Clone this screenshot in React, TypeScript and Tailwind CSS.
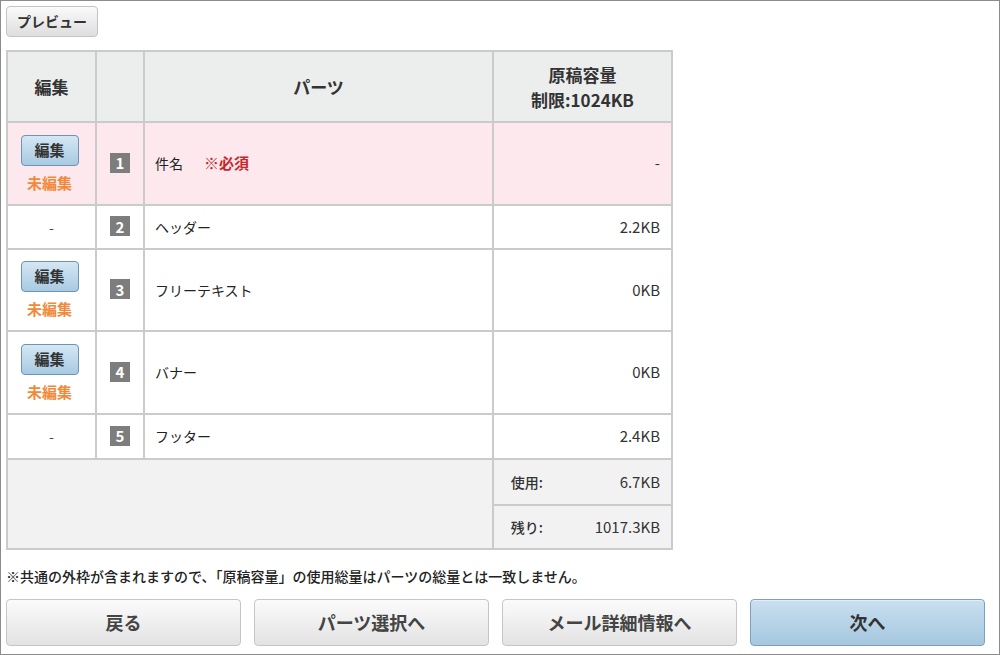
const rows = [
  { no: 1, name: "件名", required: true, size: "-", edit: true, pink: true, h: "h-[83px]" },
  { no: 2, name: "ヘッダー", size: "2.2KB", edit: false, h: "h-[44px]" },
  { no: 3, name: "フリーテキスト", size: "0KB", edit: true, h: "h-[82px]" },
  { no: 4, name: "バナー", size: "0KB", edit: true, h: "h-[83px]" },
  { no: 5, name: "フッター", size: "2.4KB", edit: false, h: "h-[45px]" },
];

function GrayButton({ label, blue }: { label: string; blue?: boolean }) {
  return (
    <button
      className={
        blue
          ? "h-[47px] w-[235px] rounded-[4px] border border-[#7f9fbd] bg-gradient-to-b from-[#c9e0f0] to-[#a5c7df] text-[18px] font-bold text-[#333] shadow-[inset_0_1px_0_#e0eef8]"
          : "h-[47px] w-[235px] rounded-[4px] border border-[#c6c6c6] bg-gradient-to-b from-[#fbfbfb] to-[#e3e3e3] text-[18px] font-bold text-[#444]"
      }
    >
      {label}
    </button>
  );
}

export default function App() {
  return (
    <div className="box-border h-[655px] w-[1000px] overflow-hidden border border-[#8c8c8c] bg-white font-['Noto_Sans_CJK_JP','Noto_Sans',sans-serif] text-[#222]">
      <div className="px-[5px] pt-[5px]">
        <button className="h-[31px] w-[92px] rounded-[4px] border border-[#c4c4c4] bg-gradient-to-b from-[#fafafa] to-[#dedede] text-[14px] font-bold text-[#333]">
          プレビュー
        </button>

        <table className="mt-[13px] w-[667px] border-collapse border-2 border-[#cbcbcb] text-[14px]">
          <colgroup>
            <col className="w-[89px]" />
            <col className="w-[48px]" />
            <col className="w-[349px]" />
            <col />
          </colgroup>
          <thead>
            <tr className="h-[71px] bg-[#eceeee] text-[17px] font-bold text-[#333]">
              <th className="border-2 border-[#cbcbcb]">編集</th>
              <th className="border-2 border-[#cbcbcb]"></th>
              <th className="border-2 border-[#cbcbcb]">パーツ</th>
              <th className="border-2 border-[#cbcbcb] leading-[25px]">
                原稿容量
                <br />
                制限:1024KB
              </th>
            </tr>
          </thead>
          <tbody>
            {rows.map((r) => (
              <tr key={r.no} className={`${r.h} ${r.pink ? "bg-[#fce8ed]" : "bg-white"}`}>
                <td className="border-2 border-[#cbcbcb] text-center">
                  {r.edit ? (
                    <div className="flex flex-col items-center pr-[4px]">
                      <button className="h-[31px] w-[58px] rounded-[4px] border border-[#6f93b4] bg-gradient-to-b from-[#d4e7f4] to-[#a8cae2] text-[15px] font-bold text-[#333]">
                        編集
                      </button>
                      <span className="mt-[7px] text-[15px] font-bold leading-[20px] text-[#f08a3a]">未編集</span>
                    </div>
                  ) : (
                    <span className="text-[#444]">-</span>
                  )}
                </td>
                <td className="border-2 border-[#cbcbcb] text-center">
                  <span className="inline-flex h-[20px] w-[20px] items-center justify-center bg-[#7d7d7d] text-[15px] font-bold leading-none text-white">
                    {r.no}
                  </span>
                </td>
                <td className="border-2 border-[#cbcbcb] pl-[10px] font-normal">
                  {r.name}
                  {r.required && <span className="ml-[21px] text-[15px] font-bold text-[#c8262c]">※必須</span>}
                </td>
                <td className="border-2 border-[#cbcbcb] pr-[11px] text-right text-[15px] font-normal text-[#333]">{r.size}</td>
              </tr>
            ))}
            <tr className="h-[46px] bg-[#f2f2f2]">
              <td colSpan={3} rowSpan={2} className="border-2 border-[#cbcbcb]"></td>
              <td className="border-2 border-[#cbcbcb] px-[11px]">
                <div className="flex items-center justify-between text-[15px] font-normal text-[#333]">
                  <span className="w-[38px] text-right text-[14px] font-medium">使用:</span>
                  <span>6.7KB</span>
                </div>
              </td>
            </tr>
            <tr className="h-[44px] bg-[#f2f2f2]">
              <td className="border-2 border-[#cbcbcb] px-[11px]">
                <div className="flex items-center justify-between text-[15px] font-normal text-[#333]">
                  <span className="w-[38px] text-right text-[14px] font-medium">残り:</span>
                  <span>1017.3KB</span>
                </div>
              </td>
            </tr>
          </tbody>
        </table>

        <p className="mt-[16px] text-[14px] font-medium leading-[20px] text-[#222]">
          ※共通の外枠が含まれますので、「原稿容量」の使用総量はパーツの総量とは一致しません。
        </p>

        <div className="mt-[13px] flex gap-[13px]">
          <GrayButton label="戻る" />
          <GrayButton label="パーツ選択へ" />
          <GrayButton label="メール詳細情報へ" />
          <GrayButton label="次へ" blue />
        </div>
      </div>
    </div>
  );
}
